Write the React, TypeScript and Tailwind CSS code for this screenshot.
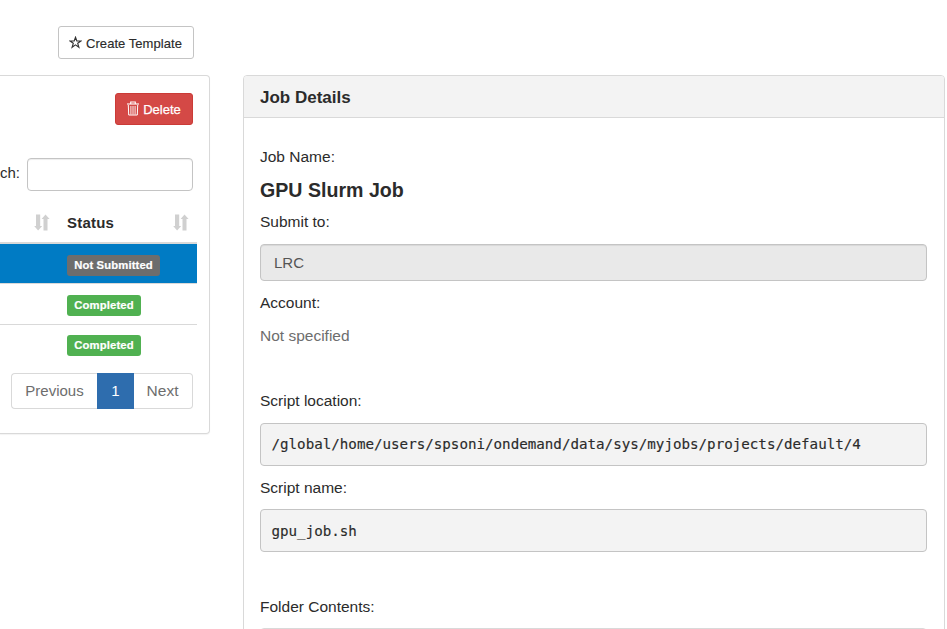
import React from "react";

function StarIcon() {
  return (
    <svg width="13" height="13" viewBox="0 0 13 13" className="mr-[4px] shrink-0" fill="none" stroke="#333" strokeWidth="1.15">
      <path d="M6.5 1.3 L7.8 4.9 L11.9 5 L8.7 7.3 L9.9 11.3 L6.5 8.9 L3.1 11.3 L4.3 7.3 L1.1 5 L5.2 4.9 Z" />
    </svg>
  );
}

function TrashIcon() {
  return (
    <svg width="12" height="15" viewBox="0 0 12 15" className="relative -top-[1px] mr-[4px] shrink-0" fill="none" stroke="#fff">
      <path d="M0 3H12" strokeWidth="1.1" />
      <path d="M3.7 3V1H8.3V3" strokeWidth="1.1" />
      <path d="M1.3 4L1.7 14H10.3L10.7 4" strokeWidth="1" />
      <path d="M3.9 5V13.5M6 5V13.5M8.1 5V13.5" strokeWidth="0.9" />
    </svg>
  );
}

function SortIcon() {
  return (
    <svg width="16" height="17" viewBox="0 0 16 17" className="block shrink-0" fill="#d0d0d0">
      <path d="M2 0.5H6.2V12H8.2L4.1 16.5L0.2 12H2Z" />
      <path d="M9.5 16.5H13.5V5H15.6L11.5 0.5L7.6 5H9.5Z" />
    </svg>
  );
}

function Badge({ label, tone }: { label: string; tone: string }) {
  return (
    <span className={`flex h-[21px] items-center justify-center rounded-[3px] text-[11.25px] font-bold tracking-[0.14px] text-white [-webkit-text-stroke:0.2px_#fff] ${tone}`}>
      {label}
    </span>
  );
}

function Label({ children, space }: { children: React.ReactNode; space: string }) {
  return <div className={`h-[22px] text-[15.5px] leading-[22px] ${space}`}>{children}</div>;
}

function JobsColumn() {
  return (
    <div className="flex h-[629px] w-[210px] shrink-0 flex-col">
      <div className="flex justify-end pr-[16px] pt-[26px]">
        <button className="flex h-[33px] w-[136px] items-center justify-center whitespace-nowrap rounded-[3px] border border-[#c4c4c4] pr-px text-[13px] tracking-[0.05px] [-webkit-text-stroke:0.15px_#2b2b2b]">
          <StarIcon />
          <span className="relative top-[1px]">Create Template</span>
        </button>
      </div>
      <section className="mt-[16px] flex h-[359px] flex-col rounded-r-[4px] border-y border-r border-[#d9d9d9] shadow-[0_1px_1px_rgba(0,0,0,0.05)]">
        <div className="flex justify-end pr-[16px] pt-[17px]">
          <button className="flex h-[32px] w-[78px] items-center justify-center rounded-[3px] border border-[#cb3b37] bg-[#d44946] text-[13px] text-white [-webkit-text-stroke:0.25px_#fff]">
            <TrashIcon />
            <span className="relative top-[1px]">Delete</span>
          </button>
        </div>
        <label className="mt-[33px] flex items-center justify-end pr-[16px]">
          <span className="relative -top-[1px] mr-[7px]">ch:</span>
          <input className="h-[33px] w-[166px] rounded-[4px] border border-[#c4c4c4] bg-white shadow-[inset_0_1px_1px_rgba(0,0,0,0.075)]" />
        </label>
        <div className="mr-[12px] mt-[12px] flex h-[41px] items-center border-b-2 border-[#d9d9d9]">
          <div className="flex w-[67px] pl-[34px]"><SortIcon /></div>
          <div className="flex flex-1 items-center justify-between pr-[8px] font-bold tracking-[0.2px]">
            <span className="relative top-[1px]">Status</span>
            <SortIcon />
          </div>
        </div>
        <div className="mr-[12px] flex h-[40px] items-center border-b border-[#d9d9d9] bg-[#007bc4] pl-[67px]">
          <div className="relative top-[2px] w-[93px]"><Badge label="Not Submitted" tone="bg-[#6d6d6d]" /></div>
        </div>
        <div className="mr-[12px] flex h-[41px] items-center border-b border-[#d9d9d9] pl-[67px]">
          <div className="relative top-[1px] w-[74px]"><Badge label="Completed" tone="bg-[#50b151]" /></div>
        </div>
        <div className="flex h-[40px] items-center pl-[67px]">
          <div className="w-[74px]"><Badge label="Completed" tone="bg-[#50b151]" /></div>
        </div>
        <nav className="mt-[8px] flex h-[36px] justify-end pr-[16px] text-[#6d6d6d]">
          <span className="flex w-[86px] items-center justify-center rounded-l-[4px] border-y border-l border-[#d9d9d9]">Previous</span>
          <span className="flex w-[37px] items-center justify-center bg-[#2e6dae] text-white">1</span>
          <span className="flex w-[59px] items-center justify-center rounded-r-[4px] border-y border-r border-[#d9d9d9] pr-px text-[15.5px]">Next</span>
        </nav>
      </section>
    </div>
  );
}

function PathBox({ children, space }: { children: React.ReactNode; space: string }) {
  return (
    <pre className={`flex h-[43px] items-center rounded-[4px] border border-[#c4c4c4] bg-[#f3f3f3] pl-[10.5px] font-['DejaVu_Sans_Mono',monospace] text-[14.19px] [-webkit-text-stroke:0.15px_#2b2b2b] ${space}`}>
      {children}
    </pre>
  );
}

function JobDetails() {
  return (
    <section className="ml-[33px] mt-[75px] flex h-[640px] w-[702px] shrink-0 flex-col overflow-hidden rounded-[4px] border border-[#d9d9d9]">
      <h3 className="flex h-[42px] shrink-0 items-center border-b border-[#d9d9d9] bg-[#f3f3f3] pl-[16px] pt-[3px] text-[17px] font-bold">
        Job Details
      </h3>
      <div className="flex flex-col pl-[16px] pr-[17px]">
        <Label space="mt-[28px]">Job Name:</Label>
        <div className="mt-[9px] h-[26px] text-[19.6px] font-bold leading-[26px]">GPU Slurm Job</div>
        <Label space="mt-[8px]">Submit to:</Label>
        <div className="mt-[11px] flex h-[37px] items-center rounded-[4px] border border-[#c4c4c4] bg-[#e9e9e9] pl-[13px] pt-[2px] text-[#555] shadow-[inset_0_1px_1px_rgba(0,0,0,0.075)]">LRC</div>
        <Label space="mt-[11px]">Account:</Label>
        <Label space="mt-[11px] text-[#6d6d6d]">Not specified</Label>
        <Label space="mt-[43px]">Script location:</Label>
        <PathBox space="mt-[11px]">/global/home/users/spsoni/ondemand/data/sys/myjobs/projects/default/4</PathBox>
        <Label space="mt-[11px]">Script name:</Label>
        <PathBox space="mt-[10px] pt-[2px]">gpu_job.sh</PathBox>
        <Label space="mt-[44px]">Folder Contents:</Label>
        <div className="mt-[10px] h-[40px] rounded-[4px] border border-[#d9d9d9]" />
      </div>
    </section>
  );
}

export default function App() {
  return (
    <main className="flex h-[629px] w-[947px] overflow-hidden bg-white font-['Liberation_Sans',Arial,sans-serif] text-[15px] text-[#2b2b2b]">
      <JobsColumn />
      <JobDetails />
    </main>
  );
}
